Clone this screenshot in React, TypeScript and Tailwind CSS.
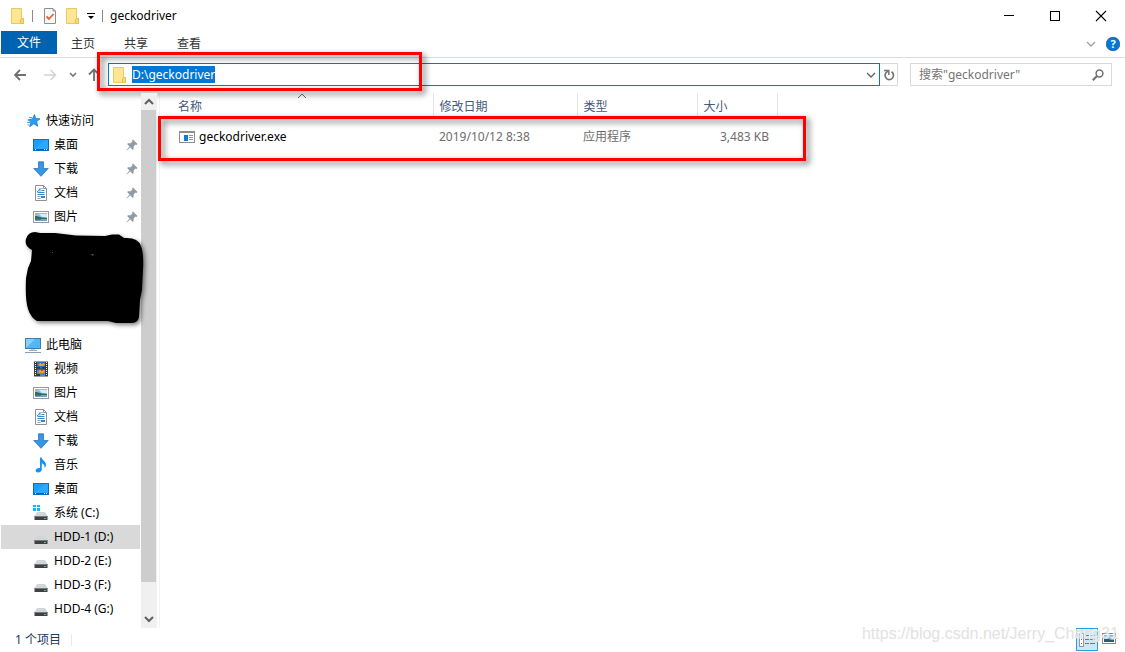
import { ReactNode } from "react";

interface NavEntry {
  id: string;
  label: string;
  icon: ReactNode;
  pinned?: boolean;
  active?: boolean;
}

const FolderIcon = () => (
  <svg width="14" height="16" viewBox="0 0 14 16" className="shrink-0">
    <path d="M0.5 0.5h10v10h2v5h-12z" fill="#ffe693" stroke="#ecc95c" />
    <path d="M10.5 10.5h2v5h-3v-4z" fill="#f9d976" stroke="#e6bf4c" />
  </svg>
);

const CheckDocIcon = () => (
  <svg width="12" height="16" viewBox="0 0 12 16">
    <path d="M0.5 0.5h8.5l2.5 2.5v12.5h-11z" fill="#f7f8fa" stroke="#8b8f94" />
    <path d="M9 0.5v2.5h2.5" fill="none" stroke="#8b8f94" />
    <path d="M2.5 8.5l2.5 2.5 4.5-5" fill="none" stroke="#f0602c" strokeWidth="1.8" />
  </svg>
);

const Chevron = ({ color = "#606060", up = false, width = 1.3 }: { color?: string; up?: boolean; width?: number }) => (
  <svg width="10" height="8" viewBox="0 0 10 8" fill="none" stroke={color} strokeWidth={width}>
    <path d={up ? "M1 6l4-4 4 4" : "M1 2l4 4 4-4"} />
  </svg>
);

const StarIcon = () => (
  <svg width="16" height="16" viewBox="0 0 16 16">
    <path
      d="M9.5 1.5l1.2 4 4.3.3-3.3 2.7 1 4.8-3.9-2.5-4 3 1-4.7L3.2 6.8l4.2-.8z"
      fill="#2b9df0"
      stroke="#1380d4"
      strokeWidth=".8"
    />
    <path d="M4 4.5h3M2.5 7h2.500M2 9.5h3M2.5 12h2" stroke="#3ba5f0" />
  </svg>
);

const DesktopIcon = () => (
  <svg width="16" height="16" viewBox="0 0 16 16">
    <rect x="0.5" y="2.5" width="15" height="11" fill="#1b9dfb" stroke="#0a6fbe" />
    <path d="M1 12L12 3h3v9z" fill="#3fb0ff" opacity=".5" />
    <path d="M1 12.5h14" stroke="#0b5f9f" />
    <path d="M2 12.5h1M11 12.5h1M13 12.5h1" stroke="#fff" />
  </svg>
);

const DownloadIcon = () => (
  <svg width="16" height="16" viewBox="0 0 16 16">
    <path d="M5.5 0.800h5v6.700h4.700L8 15.300.8 7.500h4.700z" fill="#3b93e4" stroke="#2377c4" strokeWidth=".8" />
  </svg>
);

const DocumentIcon = () => (
  <svg width="16" height="16" viewBox="0 0 16 16">
    <path d="M2.5 0.5h8l3 3v12h-11z" fill="#fff" stroke="#8e9296" />
    <path d="M10.500 0.500v3h3" fill="none" stroke="#8e9296" />
    <path d="M4 6.500h1l2-3v3M8.500 3.500h1M8.500 5.500h3M4.500 7.500h7M4.500 9.500h7" fill="none" stroke="#2b8cd0" />
    <path d="M4.500 11.500h3M4.500 13.500h3" stroke="#9aa0a6" />
    <path d="M8 11h4v2H8z" fill="#3b86b8" />
  </svg>
);

const PictureIcon = () => (
  <svg width="16" height="16" viewBox="0 0 16 16">
    <rect x="0.5" y="2.5" width="15" height="11" fill="#fff" stroke="#979b9f" />
    <path d="M2 4h12v5H2z" fill="#86bff2" />
    <path d="M6 5h8v3H9z" fill="#d8ecfa" />
    <path d="M2 7c3 0 5 1.500 12 2v1H2z" fill="#2f6b5a" />
    <path d="M2 10h12v2H2z" fill="#6fa8c8" />
    <path d="M2 9.500h6v1.500H2z" fill="#3f7486" />
  </svg>
);

const VideoIcon = () => (
  <svg width="16" height="16" viewBox="0 0 16 16">
    <path d="M1 0.5h14v15H1z" fill="#3c3c3c" />
    <path d="M4 1h8v6.500H4z" fill="#3568c8" />
    <path d="M4 8.500h8V15H4z" fill="#4a86e0" />
    <path d="M5 4l2-2h4l1 2-2 1H7zM5 11l2-2h4l1 2-2 1H7z" fill="#e5a92a" />
    <path d="M8 2h2v1H8zM8 9h2v1H8z" fill="#c94a2a" />
    <path d="M4 6h3v1.500H4zM9 6h3v1.500H9zM4 13h3v2H4z" fill="#2b3e28" />
    <path d="M2.5 1v14M13.5 1v14" stroke="#fff" strokeDasharray="1 1" />
  </svg>
);

const MusicIcon = () => (
  <svg width="16" height="16" viewBox="0 0 16 16">
    <path
      d="M7 0.5h1.600c.2 2.500 4.700 4 4.400 7.500-.1 1.300-.8 2.200-1.500 3 .5-2.300-.5-4-2.700-4.700v6.200c0 1.600-1.500 2.800-3.500 2.900-1.700 0-2.800-.8-2.700-2 .1-1.400 1.900-2.600 4.400-2.300z"
      fill="#0f96f5"
    />
  </svg>
);

const DriveIcon = ({ system = false }: { system?: boolean }) => (
  <svg width="16" height="16" viewBox="0 0 16 16">
    {system && <path d="M0 0h3v2H0zM4 0h3v2H4zM0 3h3v3H0zM4 3h3v3H4z" fill="#19b2f2" />}
    <path d="M4 7h8l2.500 4h-13z" fill="#d3d6d9" />
    <path d="M1.500 11h13v4h-13z" fill="#3e4043" />
    <path d="M1.500 11h13v1h-13z" fill="#77797c" />
    <path d="M11 13h2v1h-2z" fill="#3de04c" />
  </svg>
);

const ComputerIcon = () => (
  <svg width="16" height="16" viewBox="0 0 16 16">
    <rect x="0.5" y="1.5" width="15" height="10" fill="#52b6fa" stroke="#3d7ca8" />
    <path d="M1 11L10 2H1z" fill="#8bd0fd" />
    <path d="M6 12.500h4" stroke="#b8cbd8" />
    <path d="M4 13.500h8" stroke="#9db3c4" />
    <path d="M0 15.500h16" stroke="#86a3ba" />
  </svg>
);

const PinIcon = () => (
  <svg width="12" height="12" viewBox="0 0 12 12">
    <path
      d="M7 0.5L11.500 5l-1.200.9-.8-.3L7.700 7.500 7.500 10.300 6.500 10.800 4.200 8.300.7 11.500.3 11.200 3.500 7.500 1.300 5.300l.5-1L4.600 4.200 6.400 2.500 6 1.500z"
      fill="#8f9ba7"
    />
  </svg>
);

const ExeIcon = () => (
  <svg width="16" height="12" viewBox="0 0 16 12">
    <rect x="0.5" y="0.5" width="15" height="11" fill="#fff" stroke="#8b8e91" />
    <path d="M0 0h16v2H0z" fill="#8b8e91" />
    <path d="M5 4h4v6H5z" fill="#1379d6" />
    <path d="M10 4.500h4M10 6.500h4M10 8.500h4" stroke="#8f9396" />
  </svg>
);

const quickAccess: NavEntry[] = [
  { id: "q-desktop", label: "桌面", icon: <DesktopIcon />, pinned: true },
  { id: "q-downloads", label: "下载", icon: <DownloadIcon />, pinned: true },
  { id: "q-documents", label: "文档", icon: <DocumentIcon />, pinned: true },
  { id: "q-pictures", label: "图片", icon: <PictureIcon />, pinned: true },
];

const thisPc: NavEntry[] = [
  { id: "videos", label: "视频", icon: <VideoIcon /> },
  { id: "pictures", label: "图片", icon: <PictureIcon /> },
  { id: "documents", label: "文档", icon: <DocumentIcon /> },
  { id: "downloads", label: "下载", icon: <DownloadIcon /> },
  { id: "music", label: "音乐", icon: <MusicIcon /> },
  { id: "desktop", label: "桌面", icon: <DesktopIcon /> },
  { id: "c", label: "系统 (C:)", icon: <DriveIcon system /> },
  { id: "d", label: "HDD-1 (D:)", icon: <DriveIcon />, active: true },
  { id: "e", label: "HDD-2 (E:)", icon: <DriveIcon /> },
  { id: "f", label: "HDD-3 (F:)", icon: <DriveIcon /> },
  { id: "g", label: "HDD-4 (G:)", icon: <DriveIcon /> },
];

const NavGroup = ({ title, icon, items }: { title: string; icon: ReactNode; items: NavEntry[] }) => (
  <div>
    <a href="#" className="flex h-6 items-center gap-[5px] pl-[25px]">
      {icon}
      <span>{title}</span>
    </a>
    <ul>
      {items.map((item) => (
        <li key={item.id}>
          <a
            href="#"
            className={`ml-px flex h-6 items-center gap-[5px] pr-[2px] pl-8 ${item.active ? "bg-[#d9d9d9]" : ""}`}
          >
            {item.icon}
            <span className="flex-1">{item.label}</span>
            {item.pinned && <PinIcon />}
          </a>
        </li>
      ))}
    </ul>
  </div>
);

const Sidebar = () => (
  <nav className="relative flex w-[157px] shrink-0">
    <div className="flex w-[140px] flex-col gap-[104px] pt-4 pb-[7px]">
      <NavGroup title="快速访问" icon={<StarIcon />} items={quickAccess} />
      <NavGroup title="此电脑" icon={<ComputerIcon />} items={thisPc} />
    </div>
    <div className="ml-px flex w-4 flex-col bg-[#f0f0f0] pr-px">
      <button aria-label="Scroll up" className="flex h-[17px] items-center justify-center">
        <Chevron up width={2} />
      </button>
      <div className="mb-7 flex-1 bg-[#cdcdcd]" />
      <button aria-label="Scroll down" className="flex h-[18px] items-center justify-center">
        <Chevron width={2} />
      </button>
    </div>
    <svg
      width="126"
      height="100"
      viewBox="24 229 126 100"
      className="absolute top-[136px] left-6 drop-shadow-[2px_2px_2px_rgba(0,0,0,0.5)]"
    >
      <path d="M26 239Q28 232 35 232L40 233 55 233 76 235.500 105 236 112 234.500 119 234.500 124 238Q138 237 141 246Q144 254 143 270L142 290 140 300 139 317Q138 323 131 323L116 323 108 321 37 321Q31 318 28 309Q25 300 26 278L28 268 31 261 32 250Q24 246 26 239Z" />
      <path d="M52 252h1v1h-1zM91 254h3l-1.500 2z" fill="#555" />
    </svg>
  </nav>
);

const FileTable = () => (
  <main className="ml-0.5 min-w-0 flex-1 border-l border-[#f3f3f3] pl-3">
    <div className="relative w-fit">
      <table className="w-[605px] table-fixed text-left text-[#6d6d6d]">
        <colgroup>
          <col className="w-[261px]" />
          <col className="w-36" />
          <col className="w-[120px]" />
          <col className="w-20" />
        </colgroup>
        <thead className="text-[#44597a]">
          <tr className="h-[25px]">
            <th className="relative border-r border-[#e5e5e5] pt-0.5 pl-1.5 font-normal">
              名称
              <span className="absolute inset-x-0 -top-px flex justify-center">
                <Chevron up width={1} />
              </span>
            </th>
            <th className="border-r border-[#e5e5e5] pt-0.5 pl-1.5 font-normal">修改日期</th>
            <th className="border-r border-[#e5e5e5] pt-0.5 pl-1.5 font-normal">类型</th>
            <th className="border-r border-[#e5e5e5] pt-0.5 pl-1.5 font-normal">大小</th>
          </tr>
        </thead>
        <tbody>
          <tr className="h-[38px]">
            <td className="pl-[7px]">
              <a href="#" className="flex items-center gap-1 text-black">
                <ExeIcon />
                geckodriver.exe
              </a>
            </td>
            <td className="pl-1.5">2019/10/12 8:38</td>
            <td className="pl-1.5">应用程序</td>
            <td className="pr-2 text-right">3,483 KB</td>
          </tr>
        </tbody>
      </table>
      <div className="pointer-events-none absolute top-[23px] -right-7 -left-3.5 h-[45px] border-3 border-[#fe0000] drop-shadow-[3px_3px_3px_rgba(0,0,0,0.6)]" />
    </div>
  </main>
);

const TitleBar = () => (
  <header className="flex h-[31px] items-center pr-px">
    <div className="flex flex-1 items-center pl-[11px]">
      <FolderIcon />
      <span className="ml-[7px] h-3 w-px bg-[#8a8a8a]" />
      <button aria-label="Properties" className="ml-[11px]">
        <CheckDocIcon />
      </button>
      <button aria-label="New folder" className="ml-2.5">
        <FolderIcon />
      </button>
      <button aria-label="Customize" className="ml-[7px]">
        <svg width="8" height="6" viewBox="0 0 8 6">
          <path d="M0 0h8v1H0zM1 3h6L4 6z" />
        </svg>
      </button>
      <span className="ml-[7px] h-3 w-px bg-[#8a8a8a]" />
      <h1 className="ml-[7px]">geckodriver</h1>
    </div>
    <button aria-label="Minimize" className="flex h-full w-[46px] items-center justify-center">
      <span className="h-px w-2.5 bg-black" />
    </button>
    <button aria-label="Maximize" className="flex h-full w-[46px] items-center justify-center">
      <span className="size-[10px] border border-black" />
    </button>
    <button aria-label="Close" className="flex h-full w-[46px] items-center justify-center">
      <svg width="12" height="12" viewBox="0 0 12 12" stroke="#000" strokeWidth="1.1">
        <path d="M1 1l10 10M11 1L1 11" />
      </svg>
    </button>
  </header>
);

const Ribbon = () => (
  <div className="flex h-[27px] items-start border-b border-[#dadbdc] pl-px text-[#333]">
    <button className="h-[23px] w-14 bg-[#0063b1] text-white">文件</button>
    <div className="flex flex-1 gap-px">
      <button className="h-[26px] px-3.5">主页</button>
      <button className="h-[26px] px-3.5">共享</button>
      <button className="h-[26px] px-3.5">查看</button>
    </div>
    <div className="flex h-[26px] items-center gap-[10px] pr-[5px]">
      <button aria-label="Expand ribbon">
        <Chevron color="#a0a0a0" />
      </button>
      <button
        aria-label="Help"
        className="flex size-[14px] items-center justify-center rounded-full bg-[#0078d7] text-[11px] font-bold text-white ring-1 ring-[#2f6ca8] ring-inset"
      >
        ?
      </button>
    </div>
  </div>
);

const AddressRow = () => (
  <div className="relative flex h-[35px] items-start pt-[5px] pr-[13px]">
    <div className="flex h-[23px] w-[108px] shrink-0 items-center pl-3.5">
      <button aria-label="Back">
        <svg width="13" height="12" viewBox="0 0 13 12" fill="none" stroke="#707070" strokeWidth="1.8">
          <path d="M12 6H1.500M6 1L1 6l5 5" />
        </svg>
      </button>
      <button aria-label="Forward" className="ml-[17px]">
        <svg width="13" height="12" viewBox="0 0 13 12" fill="none" stroke="#d4d4d4" strokeWidth="1.6">
          <path d="M0 6h11.500M6.500 1l5 5-5 5" />
        </svg>
      </button>
      <button aria-label="Recent locations" className="ml-3">
        <svg width="8" height="6" viewBox="0 0 8 6" fill="none" stroke="#777" strokeWidth="1.6">
          <path d="M1 1l3 3 3-3" />
        </svg>
      </button>
      <button aria-label="Up" className="ml-[11px]">
        <svg width="12" height="13" viewBox="0 0 12 13" fill="none" stroke="#707070" strokeWidth="1.8">
          <path d="M6 13V1.500M1 6.500l5-5 5 5" />
        </svg>
      </button>
    </div>
    <div className="flex h-[23px] min-w-0 flex-1 items-center border border-[#0078d7] pr-[3px] pl-1">
      <FolderIcon />
      <div className="ml-[5px] flex flex-1">
        <input
          aria-label="Address"
          defaultValue="D:\geckodriver"
          className="field-sizing-content h-[17px] bg-[#0078d7] text-white outline-none"
        />
      </div>
      <button aria-label="Previous locations">
        <Chevron />
      </button>
    </div>
    <button
      aria-label="Refresh"
      className="flex h-[23px] w-[18px] items-center justify-center border border-l-0 border-[#d9d9d9]"
    >
      <svg width="12" height="12" viewBox="0 0 12 12" fill="none" stroke="#757575" strokeWidth="1.7">
        <path d="M8.500 2.800A4.200 4.200 0 1 1 2.800 4L5 1.800" />
        <path d="M1 1.500h4.800v4.500" strokeWidth="1.5" />
      </svg>
    </button>
    <div className="ml-3 flex h-[23px] w-[202px] items-center border border-[#d9d9d9] pr-[7px] pl-2">
      <input
        type="search"
        aria-label="Search"
        placeholder={'搜索"geckodriver"'}
        className="min-w-0 flex-1 outline-none placeholder:text-[#757575]"
      />
      <svg width="12" height="12" viewBox="0 0 12 12" fill="none" stroke="#707070">
        <circle cx="7.5" cy="4.5" r="3.4" strokeWidth="1.5" />
        <path d="M5 7L0.8 11.2" strokeWidth="2" />
      </svg>
    </div>
    <div className="pointer-events-none absolute -top-1.5 left-[97px] h-[39px] w-[325px] border-3 border-[#fe0000] drop-shadow-[3px_3px_3px_rgba(0,0,0,0.6)]" />
  </div>
);

const StatusBar = () => (
  <footer className="relative flex h-6 items-center pr-[9px] pl-[15px] text-[#1e395b]">
    <span>1 个项目</span>
    <span className="ml-2.5 h-3 w-px bg-[#e8e8e8]" />
    <button
      aria-label="Details view"
      className="mb-px ml-auto flex h-[23px] w-[22px] items-center justify-center border border-[#26a0da] bg-[#cbe8f6]"
    >
      <svg width="16" height="14" viewBox="0 0 16 14">
        <rect x="0.5" y="0.5" width="4" height="13" fill="#fff" stroke="#999" />
        <path d="M2 3h1v1H2zM2 6h1v1H2z" fill="#3a7ca8" />
        <path d="M2 10h1v1H2z" fill="#c33" />
        <path d="M6 2.500h4M11 2.500h5M6 6.500h4M11 6.500h5M6 10.500h4M11 10.500h5" stroke="#777" />
      </svg>
    </button>
    <button aria-label="Large icons view" className="mb-1 ml-1">
      <svg width="14" height="11" viewBox="0 0 14 11">
        <rect x="0.5" y="0.5" width="13" height="10" fill="#fff" stroke="#888" />
        <path d="M2 2h10v7H2z" fill="#7db9ee" />
        <path d="M2 4c3 1 5 3 10 3v2H2z" fill="#2d5c6c" />
      </svg>
    </button>
    <span className="pointer-events-none absolute right-1.5 bottom-1.5 font-['Liberation_Sans',sans-serif] text-base text-[#e2e2e2] [text-shadow:-1px_-1px_0_rgba(255,255,255,0.8)]">
      https://blog.csdn.net/Jerry_Chang31
    </span>
  </footer>
);

export default function App() {
  return (
    <div className="flex min-h-screen flex-col bg-white font-['Noto_Sans','Noto_Sans_CJK_SC',sans-serif] text-xs text-black">
      <TitleBar />
      <Ribbon />
      <AddressRow />
      <div className="flex flex-1">
        <Sidebar />
        <FileTable />
      </div>
      <StatusBar />
    </div>
  );
}
